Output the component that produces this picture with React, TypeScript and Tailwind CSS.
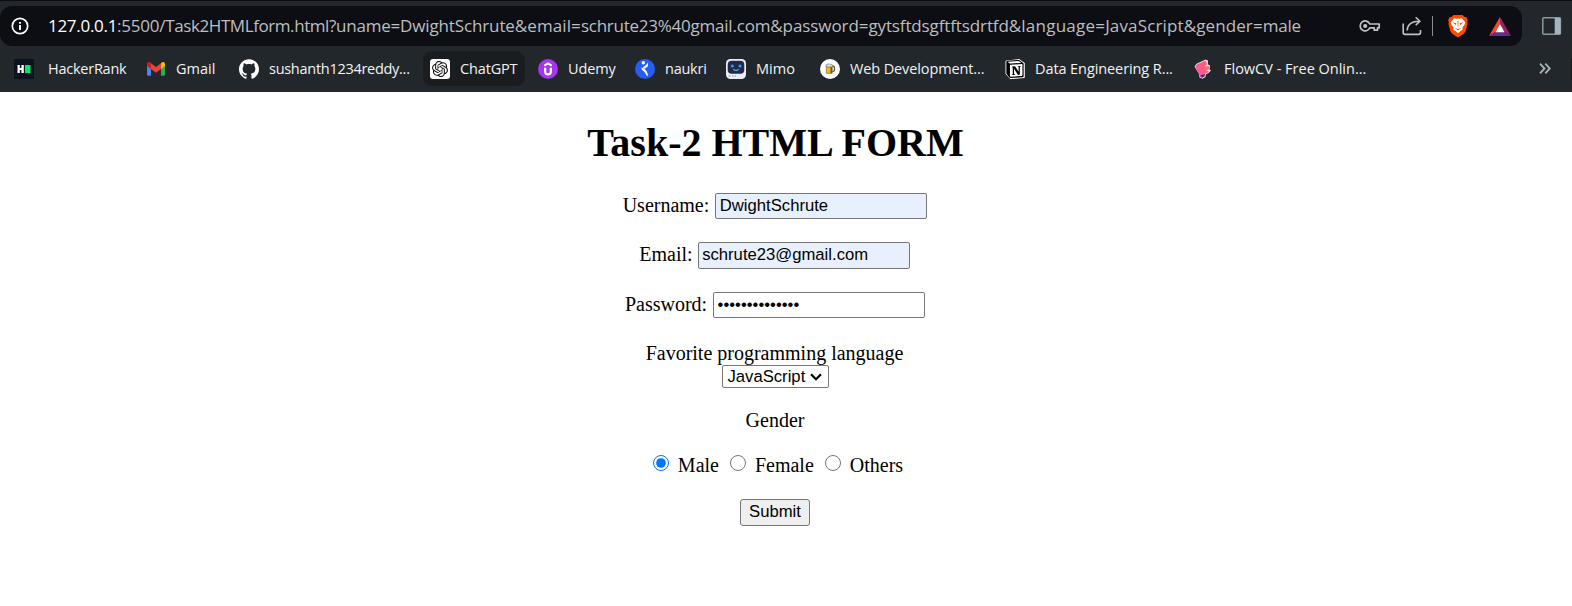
import type { ReactNode } from "react";
import { SiGithub, SiNotion, SiOpenai } from "react-icons/si";

function HackerRankIcon() {
  return (
    <svg viewBox="0 0 20 20" className="size-5">
      <rect width="20" height="20" fill="#0b131e" />
      <path d="M3.500 6h2.300v2.900h1.600V6h2.400v8H7.400v-3H5.800v3H3.500z" fill="#fff" />
      <rect x="11" y="6" width="5.500" height="8" fill="#05e76b" />
    </svg>
  );
}

function GmailIcon() {
  return (
    <svg viewBox="0 0 20 20" className="size-5">
      <path d="M1 5v10.600c0 .8.500 1.200 1.200 1.200H5V8z" fill="#4285f4" />
      <path d="M19 5v10.600c0 .8-.500 1.200-1.200 1.200H15V8z" fill="#34a853" />
      <path d="M15 4.300V10l4-3V5.300c0-2.100-2.100-3-3.500-1.500z" fill="#fbbc04" />
      <path d="M1 5.300C1 3.200 3.100 2.300 4.500 3.800L5 4.300V10L1 7z" fill="#c5221f" />
      <path d="M5 4.200l5 3.800 5-3.800V10l-5 3.800L5 10z" fill="#ea4335" />
    </svg>
  );
}

function UdemyIcon() {
  return (
    <svg viewBox="0 0 20 20" className="size-5">
      <circle cx="10" cy="10" r="10" fill="#a435f0" />
      <path d="M6.300 6.600 10 4.400l3.700 2.200" fill="none" stroke="#fff" strokeWidth="1.900" />
      <path d="M7.200 8.700v4.100c0 1.700 1 2.600 2.800 2.600s2.800-.9 2.800-2.600V8.700" fill="none" stroke="#fff" strokeWidth="2.200" />
    </svg>
  );
}

function NaukriIcon() {
  return (
    <svg viewBox="0 0 20 20" className="size-5">
      <circle cx="10" cy="10" r="10" fill="#275df5" />
      <circle cx="8.300" cy="3.800" r="1.700" fill="#fff" />
      <path d="M13 3.500v3.700L9.800 9.800 7.600 8.200C9.800 7.300 11.700 5.800 13 3.500z" fill="#fff" />
      <path d="M6.500 8.500c3.900 1.300 6.600 4.300 6.300 8.700-2.300-1.200-2-3.100-3.800-4.700C7.400 11.200 6.200 10.600 6.500 8.500z" fill="#fff" />
    </svg>
  );
}

function MimoIcon() {
  return (
    <svg viewBox="0 0 20 20" className="size-5">
      <rect width="20" height="20" rx="4.500" fill="#eeeef6" />
      <rect x="1.700" y="1.700" width="16.600" height="13" rx="4" fill="#252848" />
      <circle cx="6.300" cy="7" r="1.500" fill="#25a8f5" />
      <circle cx="14" cy="7" r="1.500" fill="#25a8f5" />
      <path d="M7.400 10.200c1.300 1.900 4 1.900 5.300 0" fill="none" stroke="#31b4dc" strokeWidth="1.400" />
      <path d="M2.500 17h2M6 17h1.500M8.500 17H10" stroke="#9a8fc4" strokeWidth="1.100" />
    </svg>
  );
}

function BeerIcon() {
  return (
    <svg viewBox="0 0 20 20" className="size-5">
      <circle cx="10" cy="10" r="10" fill="#fff" />
      <path d="M12.300 7.200h1c1 0 1.200.7 1.200 2.600s-.2 2.600-1.200 2.600h-1" fill="none" stroke="#4b4b4b" strokeWidth="1.200" />
      <path d="M6.400 7h5.900v7.300H6.400z" fill="#f9b816" stroke="#6f5a2a" strokeWidth=".6" />
      <path d="M11.200 8v6.300" stroke="#4b4b4b" strokeWidth="1.300" />
      <path d="M6.100 8V6.400c0-1.100 1.200-1.400 1.800-1 .6-.7 2-.7 2.600 0 1-.3 2.200.2 2.200 1.200V8z" fill="#ded9cc" stroke="#77705f" strokeWidth=".7" />
    </svg>
  );
}

function NotionIcon() {
  return (
    <span className="relative block size-5">
      <svg viewBox="0 0 20 20" className="size-5">
        <path d="M1.300 2.200 14 .900 19 4.300V18.300L5.500 19.300 1.300 14.500z" fill="#fff" stroke="#fff" strokeWidth="1.600" strokeLinejoin="round" />
      </svg>
      <SiNotion className="absolute top-px left-px size-[18px] text-black" />
    </span>
  );
}

function FlowIcon() {
  return (
    <svg viewBox="0 0 20 20" className="size-5">
      <path d="M.5 7.500 2.500 4.800 11.500.600 14 1.500 13.800 5.200 16 6.400 15.600 10.500 17 11.500 14.500 14 11.800 15.500 11.500 18 8.500 19.700 5.500 18.500 5 15z" fill="#f3dbe3" />
      <path d="M1.500 7.500 3 5.500 11.600 1.500l1.200 3.700-2.800 2.200 5.300.2-.5 2.600-3.800 1.300 3.900.7-1.400 1.500-6 3-1.900-.5z" fill="#ff5b7f" />
      <path d="M1.500 7.500 3 5.500l2.400-1.100 2.100 12.300-1.900-.5z" fill="#ff56a0" />
      <path d="M12 2.500 12.800 5.200 8.500 8l6.800-.4-.5 2.600-5.300 2z" fill="#ff6672" />
      <path d="m6.300 16.500 4.500-1.600v2.200l-2.400 1.600-1.800-.7z" fill="#5b1a80" />
    </svg>
  );
}

function BraveIcon() {
  return (
    <svg viewBox="0 0 20 24" className="h-6 w-5">
      <path d="M5.500.9h9l2 2.200h1.700l1.600 3-.6 2 .3 2-2 7.500-2 2.500L10 23.500 4.500 20.100l-2-2.500L.5 10.100l.3-2-.6-2 1.600-3h1.700z" fill="#ff4a00" />
      <path d="m6.200 4.200 2 .500 1.800-.300 1.800.300 2-.500 3.500 4-.7 2.400-2.300 3.200.400 1.900-2.500 1.600-2.200 1.900-2.200-1.900-2.500-1.600.400-1.900-2.300-3.200-.7-2.400z" fill="#fff" />
      <path d="M4.500 8.200 8.300 9.300l-.500 1.800zM15.500 8.200l-3.800 1.100.5 1.800zM9.500 7h1l-.200 5.500h-.6zM6.900 13.900l3.100 1.200 3.100-1.200-3.100 2.700z" fill="#ff4a00" />
    </svg>
  );
}

function Bookmark({ width, text, icon, children }: { width: string; text: string; icon: ReactNode; children: string }) {
  return (
    <div className={`flex h-[35px] shrink-0 items-center ${width}`}>
      <span className="w-5 shrink-0">{icon}</span>
      <span className={`leading-5 whitespace-nowrap ${text}`}>{children}</span>
    </div>
  );
}

function Address() {
  return (
    <div className="ml-[19px] w-[1311px] text-[17px] leading-6 whitespace-nowrap text-[#bcbec0]">
      <span className="tracking-[-0.290px] text-white">127.0.0.1</span>
      <span className="tracking-[-0.230px]">:5500/</span>
      <span className="tracking-[-0.420px]">Task2HTMLform.html</span>
      <span className="tracking-[-0.240px]">?uname=</span>
      <span className="tracking-[-0.120px]">DwightSchrute</span>
      <span className="tracking-[0.100px]">&amp;email=</span>
      <span className="tracking-[-0.260px]">schrute23%40</span>
      <span className="tracking-[-0.190px]">gmail.com</span>
      <span className="tracking-[-0.080px]">&amp;password=</span>
      <span className="tracking-[-0.120px]">gytsftdsgftftsdrtfd</span>
      <span className="tracking-[0.230px]">&amp;language=</span>
      <span className="tracking-[0.150px]">JavaScript</span>
      <span className="tracking-[0.090px]">&amp;gender=</span>
      <span className="tracking-[-0.250px]">male</span>
    </div>
  );
}

function Toolbar() {
  return (
    <header className="flex h-[92px] flex-col border-t border-[#0b0d10] bg-[#22272b] font-['Open_Sans','Noto_Sans',sans-serif]">
      <div className="mt-[5px] flex h-10 items-center">
        <div className="flex h-10 w-[1522px] items-center rounded-xl bg-[#0d0e13]">
          <svg viewBox="0 0 18 18" className="ml-[11px] size-[18px]">
            <circle cx="9" cy="9" r="7.700" fill="none" stroke="#fff" strokeWidth="1.700" />
            <path d="M9 8v5.100M9 4.900v1.800" stroke="#fff" strokeWidth="1.900" />
          </svg>
          <Address />
          <svg viewBox="0 0 22 14" className="h-[14px] w-[22px]" fill="none" stroke="#bfc1c4" strokeWidth="1.700">
            <path d="M10.800 5H20.200V8.800H18.500V11.200H15.200V8.800H10.800A5 5 0 1 1 10.800 5z" strokeLinejoin="round" />
            <circle cx="6.200" cy="7" r="2.100" fill="#bfc1c4" stroke="none" />
          </svg>
          <svg viewBox="0 0 20 20" className="ml-[21px] size-5" fill="none" stroke="#bfc1c4" strokeWidth="1.600">
            <path d="M1.200 7.500v9c0 1.300.600 1.900 1.900 1.900h13.500c1.300 0 1.900-.600 1.900-1.900v-2.600" />
            <path d="M5.200 14.500C5.500 8.500 9.300 5.300 17.500 5.300M13.700 1.300l4.100 4-4.100 4" />
          </svg>
          <div className="ml-[10px] h-5 w-px bg-[#8b8d90]" />
          <span className="ml-[15px] block h-6 w-5">
            <BraveIcon />
          </span>
          <svg viewBox="0 0 22 19" className="ml-[21px] h-[19px] w-[22px]">
            <path d="M11 0 0 19l6.500-4L11 7z" fill="#ff4724" />
            <path d="m11 0 11 19-6.500-4L11 7z" fill="#9e1f63" />
            <path d="M0 19h22l-6.500-4h-9z" fill="#662d91" />
            <path d="m11 7 4.600 8.200H6.400z" fill="#fff" />
          </svg>
        </div>
        <svg viewBox="0 0 20 18" className="ml-5 h-[18px] w-5">
          <rect x=".8" y=".8" width="17.600" height="16.400" rx="1" fill="none" stroke="#8799a3" strokeWidth="1.500" />
          <path d="M12.700 1h5.700v16h-5.700z" fill="#a4b5bf" />
        </svg>
      </div>
      <div className="mt-[5px] flex h-[35px] items-center pl-[14px] text-[14.500px] text-[#f1f2f3]">
        <Bookmark width="w-[132px]" text="ml-[14px] tracking-[-0.250px]" icon={<HackerRankIcon />}>HackerRank</Bookmark>
        <Bookmark width="w-[93px]" text="ml-[10px]" icon={<GmailIcon />}>Gmail</Bookmark>
        <Bookmark width="w-[184px]" text="ml-[10px] tracking-[-0.280px]" icon={<SiGithub className="size-5 text-white" />}>sushanth1234reddy...</Bookmark>
        <div className="w-[102px] shrink-0 rounded-[9px] bg-[#1a1d20] pl-[7px]">
          <Bookmark
            width="w-[95px]"
            text="ml-[10px] tracking-[-0.150px]"
            icon={
              <span className="flex size-5 items-center justify-center rounded-[3px] bg-white">
                <SiOpenai className="size-4 text-[#111]" />
              </span>
            }
          >
            ChatGPT
          </Bookmark>
        </div>
        <Bookmark width="ml-[13px] w-[97px]" text="ml-[10px] tracking-[-0.100px]" icon={<UdemyIcon />}>Udemy</Bookmark>
        <Bookmark width="w-[91px]" text="ml-[10px] tracking-[-0.250px]" icon={<NaukriIcon />}>naukri</Bookmark>
        <Bookmark width="w-[94px]" text="ml-[10px]" icon={<MimoIcon />}>Mimo</Bookmark>
        <Bookmark width="w-[185px]" text="ml-[10px] tracking-[-0.120px]" icon={<BeerIcon />}>Web Development...</Bookmark>
        <Bookmark width="w-[189px]" text="ml-[10px] tracking-[-0.090px]" icon={<NotionIcon />}>Data Engineering R...</Bookmark>
        <Bookmark width="w-[345px]" text="ml-[10px]" icon={<FlowIcon />}>FlowCV - Free Onlin...</Bookmark>
        <svg viewBox="0 0 12 11" className="h-[11px] w-3 shrink-0" fill="none" stroke="#a3b2bb" strokeWidth="1.900">
          <path d="m1 .700 4.500 4.800L1 10.300M6.300.700l4.500 4.800-4.500 4.800" />
        </svg>
        <div className="ml-5 h-[22px] w-px shrink-0 bg-[#14171a]" />
      </div>
    </header>
  );
}

const field = "box-border w-[212px] rounded-[2px] border border-[#767676] py-0 pr-0 pl-[3.5px] font-['Liberation_Sans',Arial,sans-serif] text-[16.67px] leading-[19px] text-black outline-none";

export default function App() {
  return (
    <div className="h-[606px] w-[1572px] overflow-hidden bg-white">
      <Toolbar />
      <main className="flex w-[1551px] flex-col items-center font-['Liberation_Serif','Times_New_Roman',serif] text-[20px] leading-[23px] text-black">
        <h1 className="mt-[28px] text-[40px] leading-[46px] font-bold">Task-2 HTML FORM</h1>
        <label className="mt-[27px] mr-px flex h-[26px] gap-[6px]">
          <span className="pt-px">Username:</span>
          <input className={`h-[26px] bg-[#e8f0fe] ${field}`} type="text" defaultValue="DwightSchrute" />
        </label>
        <label className="mt-[23px] mr-[2px] flex h-[27px] gap-[5px]">
          <span className="pt-px">Email:</span>
          <input className={`h-[27px] bg-[#e8f0fe] pb-px ${field}`} type="text" defaultValue="schrute23@gmail.com" />
        </label>
        <label className="mt-[23px] mr-px flex h-[26px] gap-[6px]">
          <span className="pt-px">Password:</span>
          <input className={`h-[26px] bg-white ${field}`} type="password" defaultValue="gytsftdsgftfts" />
        </label>
        <p className="mt-[24px] pr-[2px]">Favorite programming language</p>
        <div className="flex h-[23px] w-[107px] items-center rounded-[2px] border border-[#767676] bg-white pl-[4.5px] font-['Liberation_Sans',Arial,sans-serif] text-[16.67px]">
          <span>JavaScript</span>
          <svg viewBox="0 0 12 8" className="ml-[5px] h-2 w-3" fill="none" stroke="#000" strokeWidth="2.200">
            <path d="m1 1.300 5 5 5-5" />
          </svg>
        </div>
        <p className="mt-[21px] pr-px">Gender</p>
        <div className="mt-[22px] ml-[5px] flex h-[23px] items-start">
          <input type="radio" name="gender" defaultChecked className="mt-px size-4" />
          <span className="ml-[9px]">Male</span>
          <input type="radio" name="gender" className="mt-px ml-[11px] size-4" />
          <span className="ml-[9px]">Female</span>
          <input type="radio" name="gender" className="mt-px ml-[11px] size-4" />
          <span className="ml-[9px]">Others</span>
        </div>
        <button className="mt-[22px] mr-px h-[27px] w-[70px] rounded-[3px] border border-[#767676] bg-[#efefef] pb-[2px] font-['Liberation_Sans',Arial,sans-serif] text-[16.67px] leading-[23px]">
          Submit
        </button>
      </main>
    </div>
  );
}
